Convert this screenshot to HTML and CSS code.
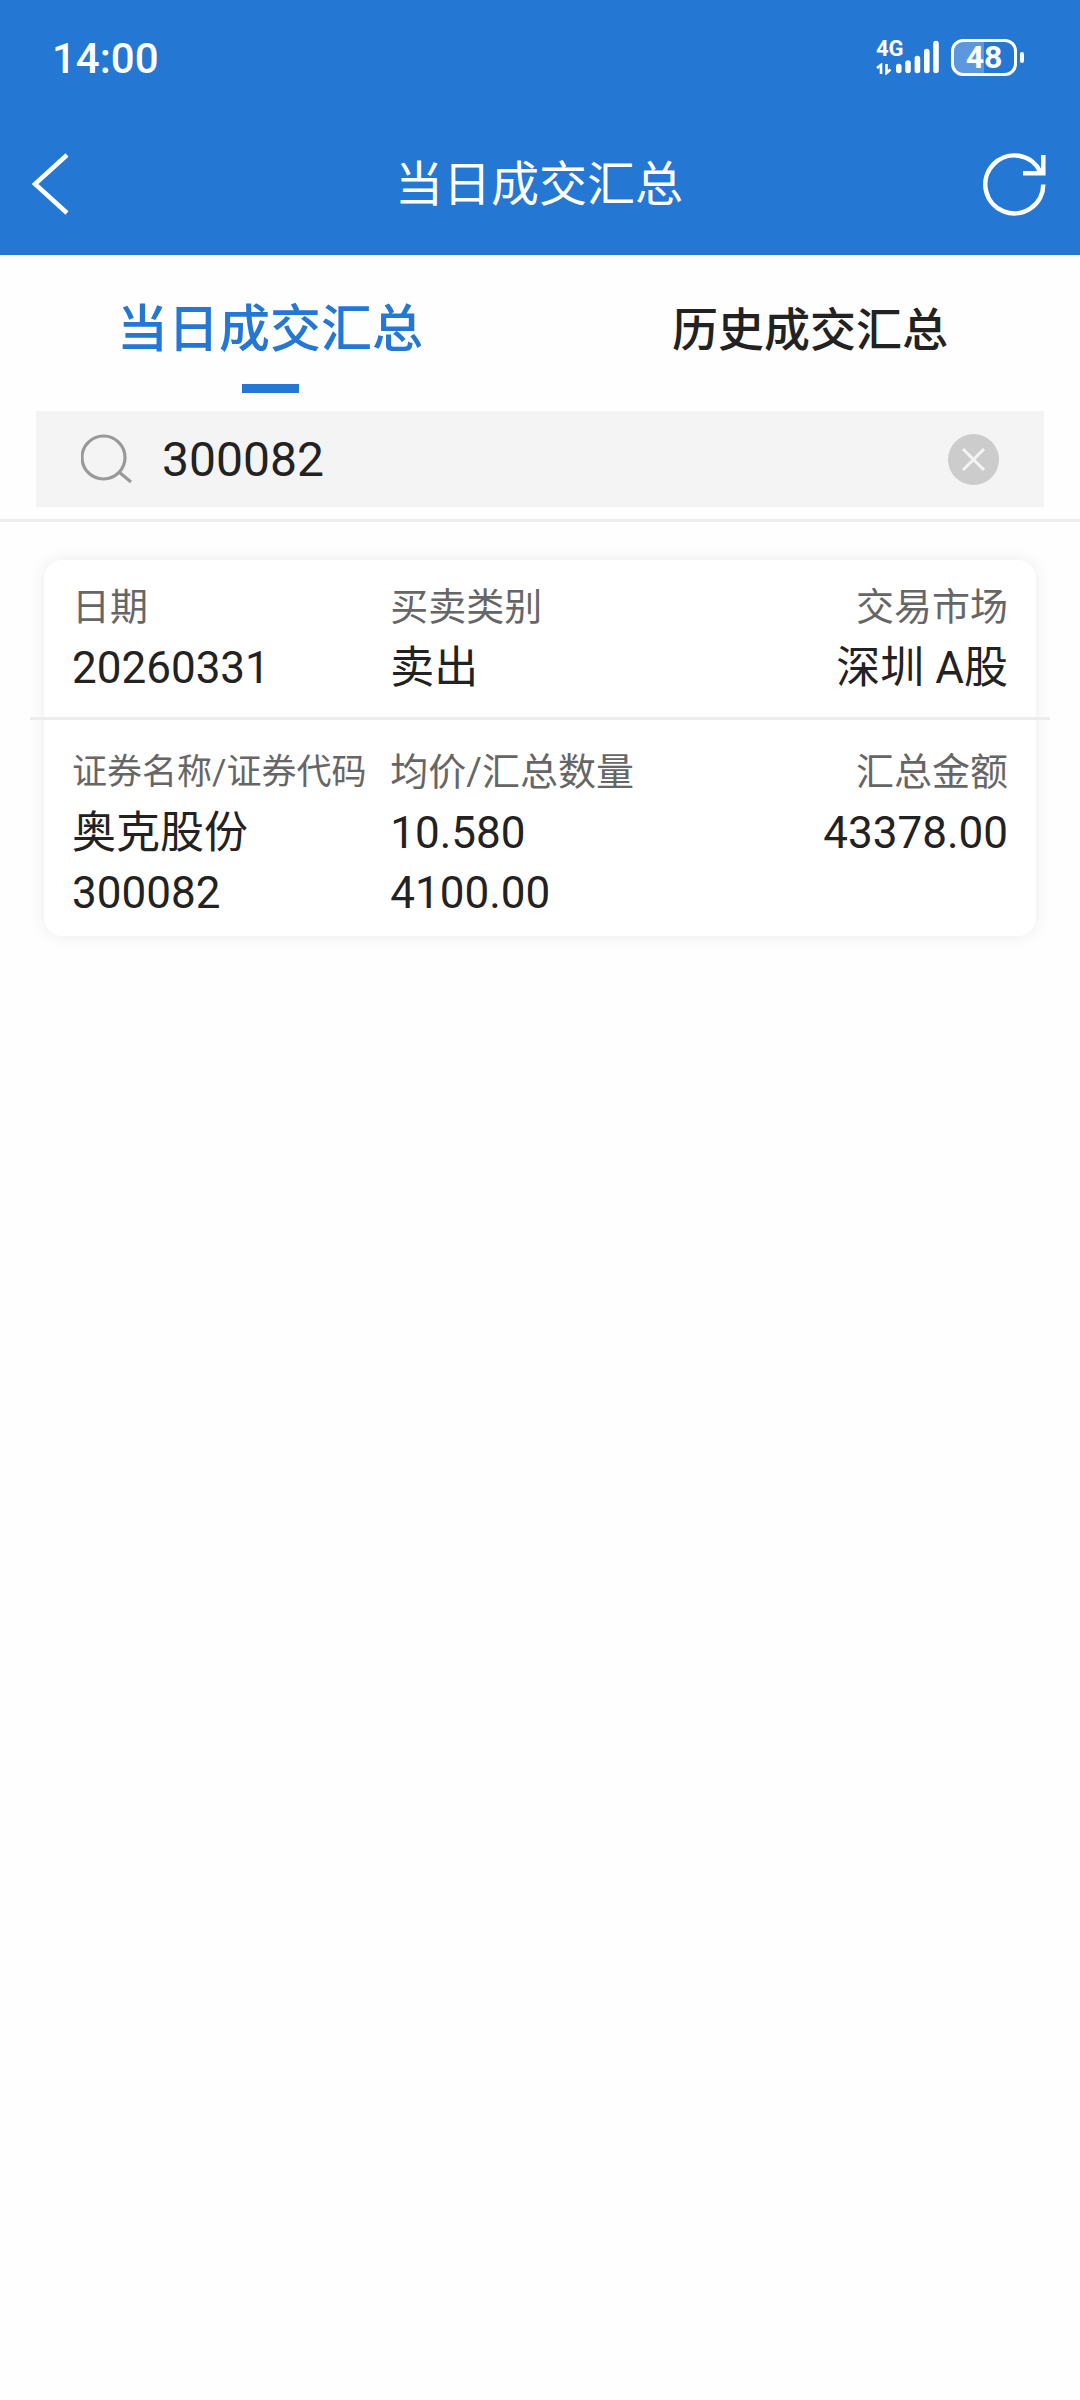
FILE: index.html
```html
<!DOCTYPE html>
<html lang="zh-CN">
<head>
<meta charset="utf-8">
<meta name="viewport" content="width=device-width, initial-scale=1">
<title>当日成交汇总</title>
<link rel="stylesheet" href="styles.css">
</head>
<body>
<header class="top">
  <div class="status">
    <span class="clock">14:00</span>
    <div class="indicators">
      <div class="network">
        <span class="network-type">4G</span>
        <svg class="traffic" width="16" height="12" viewBox="0 0 16 12" aria-hidden="true">
          <path d="M5 11V2L1 5M5 3.500H2.500M10.500 1v9l4-3.500M10.500 8.500H13" fill="none" stroke="#fff" stroke-width="2.600"/>
        </svg>
      </div>
      <svg class="signal" width="44" height="36" viewBox="0 0 44 36" aria-hidden="true">
        <path d="M3.800 27.500v4M13 24v7.500M22.400 19.500v12M31.800 12.500v19M41 4.500v27" fill="none" stroke="#fff" stroke-width="5.600" stroke-linecap="round"/>
      </svg>
      <div class="battery"><span class="battery-body">48</span><span class="battery-tip"></span></div>
    </div>
  </div>
  <div class="titlebar">
    <button class="icon-button" type="button" aria-label="返回">
      <svg width="40" height="64" viewBox="0 0 40 64" aria-hidden="true"><path d="M36 2 4 31l32 29" fill="none" stroke="#fff" stroke-width="4.500"/></svg>
    </button>
    <h1 class="title">当日成交汇总</h1>
    <button class="icon-button" type="button" aria-label="刷新">
      <svg width="64" height="64" viewBox="0 0 64 64" aria-hidden="true"><path d="M60.300 31.500A29 29 0 1 1 57.500 19M60.300 2v18.300H40" fill="none" stroke="#fff" stroke-width="4.500"/></svg>
    </button>
  </div>
</header>
<main>
  <div class="toolbar">
    <nav class="tabs">
      <button class="tab tab-active" type="button" aria-current="page">当日成交汇总</button>
      <button class="tab" type="button">历史成交汇总</button>
    </nav>
    <form class="search">
      <label class="search-icon" for="code" aria-label="证券代码">
        <svg width="52" height="52" viewBox="0 0 52 52" aria-hidden="true"><circle cx="22.500" cy="24.500" r="21.500" fill="none" stroke="#999" stroke-width="3.200"/><path d="m38 39 12 10" fill="none" stroke="#999" stroke-width="3.200"/></svg>
      </label>
      <input class="search-input" id="code" type="text" value="300082">
      <button class="clear" type="button" aria-label="清除">
        <svg width="51" height="51" viewBox="0 0 51 51" aria-hidden="true"><circle cx="25.500" cy="25.500" r="25.500" fill="#ccc"/><path d="m15 15 21 21M36 15 15 36" stroke="#f4f4f4" stroke-width="3"/></svg>
      </button>
    </form>
  </div>
  <article class="card">
    <dl class="row row-first">
      <div class="cell"><dt>日期</dt><dd>20260331</dd></div>
      <div class="cell"><dt>买卖类别</dt><dd>卖出</dd></div>
      <div class="cell cell-end"><dt>交易市场</dt><dd>深圳 A股</dd></div>
    </dl>
    <hr class="divider">
    <dl class="row row-second">
      <div class="cell"><dt class="label-small">证券名称/证券代码</dt><dd>奥克股份</dd><dd>300082</dd></div>
      <div class="cell"><dt>均价/汇总数量</dt><dd>10.580</dd><dd>4100.00</dd></div>
      <div class="cell cell-end"><dt>汇总金额</dt><dd>43378.00</dd></div>
    </dl>
  </article>
</main>
</body>
</html>
```
FILE: styles.css
```css
* {
  box-sizing: border-box;
}

body {
  margin: 0;
  background: #fefefe;
  color: #222;
  font-family: Roboto, "Noto Sans CJK SC", sans-serif;
}

main {
  padding-bottom: 40px;
}

button,
input {
  border: 0;
  padding: 0;
  background: none;
  color: inherit;
  font: inherit;
}

svg {
  display: block;
}

.top {
  background: #2577d4;
  color: #fff;
}

.status {
  display: flex;
  align-items: center;
  justify-content: space-between;
  height: 114px;
  padding: 0 56px 0 52px;
}

.clock {
  padding-top: 3px;
  font-size: 42px;
  font-weight: 500;
  line-height: 48px;
}

.indicators {
  display: flex;
  align-items: center;
}

.network {
  display: flex;
  flex-direction: column;
  justify-content: space-between;
  width: 19px;
  height: 36px;
}

.network-type {
  font-size: 22px;
  font-weight: 700;
  line-height: 20px;
}

.signal {
  margin-right: 12px;
}

.battery {
  display: flex;
  align-items: center;
  gap: 3px;
}

.battery-body {
  width: 66px;
  height: 37px;
  border: 3px solid #fff;
  border-radius: 12px;
  background: linear-gradient(90deg, #5b98df 50%, transparent 50%);
  font-size: 32px;
  font-weight: 700;
  line-height: 31px;
  text-align: center;
}

.battery-tip {
  width: 4px;
  height: 11px;
  border-radius: 2px;
  background: #fff;
}

.titlebar {
  display: flex;
  align-items: center;
  justify-content: space-between;
  height: 141px;
  padding: 0 33px 0 31px;
}

.icon-button {
  display: flex;
  width: 64px;
}

.title {
  margin: 0;
  font-size: 48px;
  font-weight: 400;
  line-height: 64px;
}

.toolbar {
  padding-bottom: 12px;
  border-bottom: 3px solid #ededed;
}

.tabs {
  display: flex;
}

.tab {
  display: flex;
  flex: 1;
  flex-direction: column;
  align-items: center;
  height: 156px;
  padding-top: 43px;
  font-size: 46px;
  font-weight: 500;
  line-height: 64px;
}

.tab-active {
  color: #2577d4;
  font-size: 51px;
}

.tab-active::after {
  width: 57px;
  height: 9px;
  margin-top: 22px;
  background: #2577d4;
  content: "";
}

.search {
  display: flex;
  align-items: center;
  height: 96px;
  margin: 0 36px;
  padding: 0 45px;
  background: #f4f4f4;
}

.search-input {
  flex: 1;
  min-width: 0;
  margin-left: 29px;
  padding-top: 2px;
  outline: 0;
  font-size: 48px;
  line-height: 64px;
}

.card {
  margin: 38px 44px 0;
  padding: 17px 28px 13px;
  border-radius: 18px;
  background: #fff;
  box-shadow: 0 0 16px rgba(0, 0, 0, 0.08);
}

.row {
  display: grid;
  grid-template-columns: 34fr 33fr 33fr;
  margin: 0;
}

.row-first {
  padding-bottom: 19px;
}

.row-second {
  padding-top: 22px;
}

.cell-end {
  text-align: right;
}

dt,
dd {
  height: 60px;
  margin: 0;
  line-height: 60px;
  white-space: nowrap;
}

dt {
  height: 61px;
  color: #666;
  font-size: 38px;
}

dd {
  font-size: 44px;
}

.label-small {
  font-size: 35px;
  line-height: 62px;
}

.divider {
  height: 3px;
  margin: 0 -42px;
  border: 0;
  background: #ededed;
}
```
